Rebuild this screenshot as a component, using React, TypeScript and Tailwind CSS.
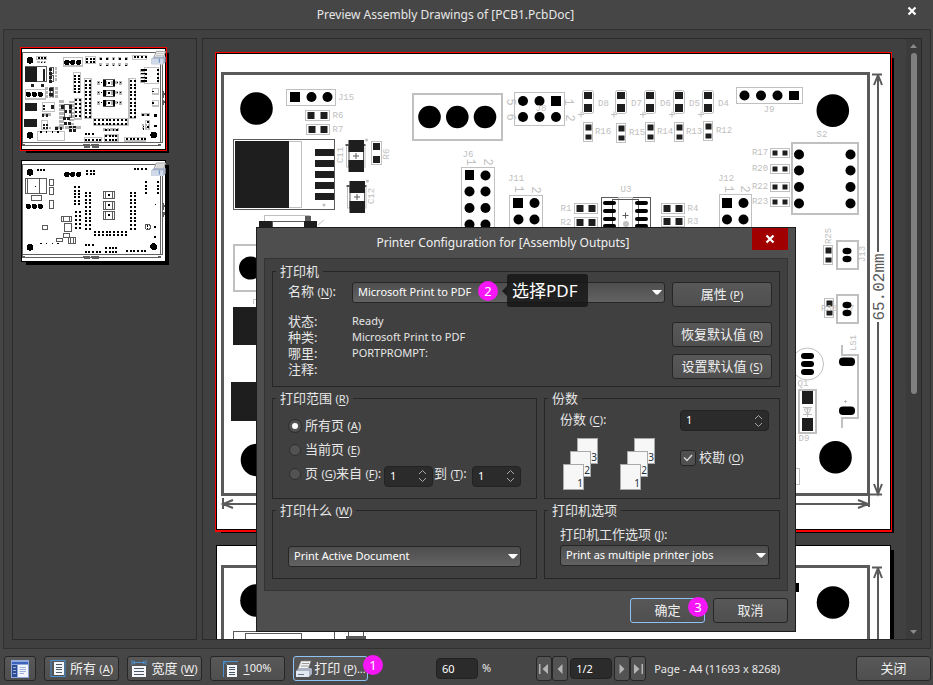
import React from "react";

const UI = "font-['Noto_Sans','Noto_Sans_CJK_SC',sans-serif]";

/* ---------- board drawing helpers ---------- */

const SILK = "#c0c0c0";
const LINE = "#5a5a5a";
const PAD = "#1e1e1e";

type Pt = [number, number];

function Box({ x, y, x2, y2, w = 1, c = SILK, rx = 0 }: { x: number; y: number; x2: number; y2: number; w?: number; c?: string; rx?: number }) {
  return <rect x={x} y={y} width={x2 - x} height={y2 - y} fill="none" stroke={c} strokeWidth={w} rx={rx} />;
}

function Fill({ x, y, x2, y2, c = PAD, rx = 0 }: { x: number; y: number; x2: number; y2: number; c?: string; rx?: number }) {
  return <rect x={x} y={y} width={x2 - x} height={y2 - y} fill={c} rx={rx} />;
}

function Holes({ at, r = 5 }: { at: Pt[]; r?: number }) {
  return (
    <>
      {at.map(([x, y]) => (
        <circle key={`${x}-${y}`} cx={x} cy={y} r={r} fill="#000" />
      ))}
    </>
  );
}

function Mark({ x, y, children, rot = 0, size = 9, c = SILK }: { x: number; y: number; children: string; rot?: number; size?: number; c?: string }) {
  return (
    <text
      x={x}
      y={y}
      fill={c}
      fontSize={size}
      fontFamily="Liberation Mono, monospace"
      textAnchor="middle"
      dominantBaseline="central"
      transform={rot ? `rotate(${rot} ${x} ${y})` : undefined}
    >
      {children}
    </text>
  );
}

function Plus({ x, y, c = SILK, r = 3 }: { x: number; y: number; c?: string; r?: number }) {
  return <path d={`M${x - r} ${y}H${x + r}M${x} ${y - r}V${y + r}`} stroke={c} fill="none" />;
}

/* two pads side by side in a frame */
function ResH({ x, y, label, lx, w = 19, h = 9, p = 5 }: { x: number; y: number; label: string; lx: number; w?: number; h?: number; p?: number }) {
  const cy = y + h / 2;
  return (
    <>
      <Box x={x} y={y} x2={x + w} y2={y + h} />
      <Fill x={x + 2} y={cy - p / 2} x2={x + 2 + p} y2={cy + p / 2} />
      <Fill x={x + w - 2 - p} y={cy - p / 2} x2={x + w - 2} y2={cy + p / 2} />
      <Mark x={lx} y={cy}>{label}</Mark>
    </>
  );
}

/* two pads stacked in a frame */
function ResV({ x, y }: { x: number; y: number }) {
  return (
    <>
      <Box x={x} y={y} x2={x + 9} y2={y + 19} />
      <Fill x={x + 2} y={y + 2} x2={x + 8} y2={y + 8} />
      <Fill x={x + 2} y={y + 12} x2={x + 8} y2={y + 17} />
    </>
  );
}

function Led({ x, label }: { x: number; label: string }) {
  return (
    <>
      <Box x={x} y={90.5} x2={x + 11} y2={113.5} rx={2} />
      <Fill x={x + 1.5} y={92} x2={x + 9.5} y2={99} />
      <Fill x={x + 1.5} y={104} x2={x + 9.5} y2={112} />
      <Plus x={x - 1.5} y={114.5} />
      <Mark x={x + 21} y={104}>{label}</Mark>
    </>
  );
}

function Cap({ x, y }: { x: number; y: number }) {
  return (
    <>
      <Box x={x - 2} y={y + 5} x2={x + 16.5} y2={y + 27} />
      <path d={`M${x - 3} ${y + 5}H${x + 17}`} stroke={LINE} strokeWidth={2} />
      <rect x={x} y={y} width={15.5} height={31} fill="#fff" />
      <Box x={x + 0.5} y={y + 5} x2={x + 15} y2={y + 27} c={LINE} />
      <Fill x={x} y={y} x2={x + 15.5} y2={y + 12} />
      <Fill x={x} y={y + 20} x2={x + 15.5} y2={y + 32} />
      <Plus x={x + 7.5} y={y + 16} c={LINE} />
      <circle cx={x + 18} cy={y} r={1.5} fill={SILK} />
    </>
  );
}

function DimensionV({ top, bottom }: { top: number; bottom: number }) {
  return (
    <g stroke={LINE} fill="none" strokeWidth={2}>
      <path d={`M878 ${top}V${bottom}`} />
      <path d={`M872 ${top + 0.5}H882`} />
      <path d={`M878 ${top + 1}L874 ${top + 11}M878 ${top + 1}L882 ${top + 11}`} />
    </g>
  );
}

function AssemblyPage() {
  return (
    <svg viewBox="215 52 680 481" className="block h-[481px] w-[680px] shrink-0" aria-label="Page 1" role="img">
      <g shapeRendering="crispEdges">
        <Fill x={221} y={58} x2={894} y2={533} c="#000" />
        <Fill x={215} y={52} x2={892} y2={532} c="#f00" />
        <Fill x={216} y={53} x2={891} y2={530} c="#000" />
        <Fill x={217} y={54} x2={890} y2={529} c="#fff" />
        <Box x={222.5} y={73.5} x2={868.5} y2={494.5} w={3} c={LINE} />
      </g>
      <DimensionV top={74} bottom={252} />
      <g stroke={LINE} fill="none" strokeWidth={2}>
        <path d="M878 322V494M870 494.5H882M874 484L878 494L882 484" />
        <path d="M223 504H868M223 498V509M233 500L223 504L233 508M869 496V507M858 500L868 504L858 508" />
      </g>
      <Mark x={880} y={287} rot={-90} size={16} c={LINE}>65.02mm</Mark>

      <Holes r={16.3} at={[[256.5, 108.5], [832.8, 110.6], [835.5, 457.3], [257, 460]]} />

      <g shapeRendering="crispEdges">
        <Box x={286.5} y={89.5} x2={335.5} y2={105.5} />
        <Fill x={290} y={92} x2={300} y2={102} c="#000" />
        <Box x={233.5} y={139.5} x2={334.5} y2={209.5} c={LINE} />
        <Fill x={235} y={141} x2={289} y2={208} />
        <path d="M289 141.5H301.5V207.5H289" stroke={SILK} fill="none" />
        {[149, 160, 171, 182, 193].map((y) => (
          <Fill key={y} x={315} y={y} x2={334} y2={y + 7} />
        ))}
        <path d="M264.5 221V215.5H310" stroke={SILK} fill="none" />
        <Fill x={305} y={216} x2={311} y2={221} c={LINE} />
        <Box x={272.5} y={221.5} x2={304.5} y2={229} c={LINE} />
        <Fill x={259} y={221} x2={272} y2={230} />
        <Fill x={304} y={221} x2={317} y2={230} />
        <Box x={371.5} y={141.5} x2={381.5} y2={164.5} />
        <Fill x={373} y={143} x2={380} y2={150} />
        <Fill x={373} y={156} x2={380} y2={163} />
        <Box x={413} y={94} x2={502} y2={140} w={2} />
        <Box x={514.5} y={92.5} x2={564.5} y2={125.5} />
        <Fill x={551} y={96} x2={561} y2={106} c="#000" />
      </g>
      <Holes at={[[311.5, 97], [327.5, 97]]} />
      <Mark x={346} y={98}>J15</Mark>
      <ResH x={305.5} y={110.5} w={24} h={10} p={7} label="R6" lx={338} />
      <ResH x={306.5} y={124.5} w={23} h={10} p={7} label="R7" lx={338} />
      <circle cx={324} cy={205} r={1.5} fill={SILK} />
      <Cap x={348.5} y={140} />
      <Cap x={349.5} y={181} />
      <Mark x={341} y={155} rot={-90}>C11</Mark>
      <Mark x={372} y={196} rot={-90}>C12</Mark>
      <Mark x={387} y={154} rot={-90}>R6</Mark>
      <path d="M318 225L324 220" stroke={SILK} />
      <Holes r={11.3} at={[[429.5, 117], [457.3, 117], [485, 117]]} />
      <Holes at={[[523, 101], [539.5, 101], [523, 117], [539.5, 117], [556, 117]]} />
      <Mark x={510} y={102} rot={90} size={12}>5</Mark>
      <Mark x={510} y={117} rot={90} size={12}>6</Mark>
      <Mark x={568} y={102} rot={90} size={12}>1</Mark>
      <Mark x={569} y={118} rot={90} size={12}>2</Mark>
      <Mark x={541} y={109}>J8</Mark>

      <Led x={582.5} label="D8" />
      <Led x={615.5} label="D7" />
      <Led x={644.5} label="D6" />
      <Led x={673.5} label="D5" />
      <Led x={702.5} label="D4" />
      <ResV x={583.5} y={122.5} />
      <ResV x={616.5} y={123.5} />
      <ResV x={645.5} y={122.5} />
      <ResV x={674.5} y={122.5} />
      <ResV x={703.5} y={121.5} />
      <Mark x={603} y={132}>R16</Mark>
      <Mark x={637} y={133}>R15</Mark>
      <Mark x={665} y={132}>R14</Mark>
      <Mark x={694} y={132}>R13</Mark>
      <Mark x={724} y={131}>R12</Mark>

      <g shapeRendering="crispEdges">
        <Box x={736.5} y={87.5} x2={802.5} y2={103.5} />
        <Fill x={789} y={91} x2={799} y2={100} c="#000" />
        <Box x={792} y={143} x2={858} y2={214} w={2} />
        <Box x={719.5} y={194.5} x2={751.5} y2={260} />
        <Fill x={722} y={198} x2={732} y2={208} c="#000" />
        <Box x={509.5} y={195.5} x2={542.5} y2={260} />
        <Fill x={513} y={198} x2={523} y2={208} c="#000" />
        <Box x={461.5} y={167.5} x2={494.5} y2={260} />
        <Fill x={465} y={170} x2={474} y2={180} c="#000" />
        <Box x={601.5} y={197.5} x2={650.5} y2={250} c={LINE} />
        <Box x={618.5} y={197.5} x2={632.5} y2={250} />
        <path d="M612.5 199V250M638.5 199V250M612 199.5H639" stroke={LINE} fill="none" />
      </g>
      {[203, 211, 219, 226].map((y) => (
        <g key={y}>
          <Fill x={603} y={y - 2} x2={616} y2={y + 2} c="#000" rx={2} />
          <Fill x={635} y={y - 2} x2={648} y2={y + 2} c="#000" rx={2} />
        </g>
      ))}
      <Plus x={625.5} y={215.5} c={LINE} />
      <circle cx={626} cy={224} r={3} fill={SILK} />
      <Mark x={626} y={190}>U3</Mark>
      <Holes at={[[744.5, 95.5], [761, 95.5], [777.5, 95.5]]} />
      <Mark x={769} y={110}>J9</Mark>
      <Mark x={822} y={135}>S2</Mark>
      <Holes at={[154.5, 170.5, 187, 203.5].flatMap((y): Pt[] => [[799, y], [850.5, y]])} />
      <ResH x={770.5} y={148.5} label="R17" lx={760} />
      <ResH x={770.5} y={164.5} label="R20" lx={760} />
      <ResH x={770.5} y={182.5} label="R22" lx={760} />
      <ResH x={770.5} y={197.5} label="R23" lx={760} />
      <Mark x={726} y={179}>J12</Mark>
      <Mark x={728} y={189} rot={90} size={12}>1</Mark>
      <Mark x={744} y={189} rot={90} size={12}>2</Mark>
      <Holes at={[[743.5, 203], [727, 219.5], [743.5, 219.5]]} />
      <Mark x={516} y={179}>J11</Mark>
      <Mark x={518} y={189} rot={90} size={12}>1</Mark>
      <Mark x={535} y={190} rot={90} size={12}>2</Mark>
      <Holes at={[[534.5, 203], [518.5, 219.5], [534.5, 219.5]]} />
      <Mark x={468} y={155}>J6</Mark>
      <Mark x={470} y={162} rot={90} size={12}>1</Mark>
      <Mark x={487} y={162} rot={90} size={12}>2</Mark>
      <Holes at={[[485.5, 175.5], [469.5, 191.5], [485.5, 191.5], [469.5, 208], [485.5, 208], [469.5, 224.5], [485.5, 224.5]]} />
      <ResH x={574.5} y={203.5} w={23} h={10} p={7} label="R1" lx={566} />
      <ResH x={574.5} y={217.5} w={23} h={10} p={7} label="R2" lx={566} />
      <ResH x={661.5} y={203.5} w={23} h={10} p={7} label="R4" lx={693} />
      <ResH x={661.5} y={216.5} w={23} h={10} p={7} label="R3" lx={693} />

      <ResV x={823.5} y={245.5} />
      <ResV x={824.5} y={298.5} />
      <Mark x={829} y={236} rot={-90}>R25</Mark>
      <Mark x={829} y={309}>R30</Mark>
      <Mark x={863} y={254} rot={-90}>J13</Mark>
      <Mark x={849} y={309}>J7</Mark>
      <Mark x={854} y={343} rot={-90}>LS1</Mark>
      <g shapeRendering="crispEdges">
        <Box x={837} y={241} x2={858} y2={269} w={2} />
        <Box x={837} y={295} x2={858} y2={323} w={2} />
        <path d="M842 345V355H858V418H842V428" fill="none" stroke={SILK} strokeWidth={2} />
        <Box x={799} y={390} x2={816} y2={433} w={2} />
        <Fill x={802} y={391} x2={813} y2={404} />
        <Fill x={802} y={418} x2={813} y2={431} />
        <Box x={780} y={468.5} x2={799.5} y2={484.5} />
        <Fill x={233} y={307} x2={275} y2={345} />
        <Fill x={231} y={382} x2={275} y2={421} />
        <Box x={234} y={245} x2={300} y2={291} w={2} />
      </g>
      {[251, 259, 305, 313].map((y) => (
        <ellipse key={y} cx={847} cy={y} rx={4.5} ry={3.2} fill="#000" />
      ))}
      <Fill x={839} y={357.5} x2={855} y2={366} c="#000" rx={4} />
      <Fill x={839} y={406.5} x2={855} y2={415} c="#000" rx={4} />
      <Plus x={845.5} y={401.5} r={1.5} />
      <circle cx={807.5} cy={364} r={16} fill="none" stroke={SILK} />
      {[356, 364, 372].map((y) => (
        <Fill key={y} x={801} y={y - 3} x2={814} y2={y + 3} c="#000" rx={3} />
      ))}
      <Mark x={803} y={384}>Q1</Mark>
      <path d="M803 407.5H812M807.5 407V417M804 409L807.5 414.5L811 409ZM803 414.5H812" stroke={SILK} fill="none" />
      <Mark x={804} y={439}>D9</Mark>
      <Holes r={11.5} at={[[250.5, 268]]} />
      <path d="M253.5 304V299.5H258" stroke={SILK} fill="none" />
    </svg>
  );
}

function BottomPage() {
  return (
    <svg viewBox="215 545 680 481" className="block h-[481px] w-[680px] shrink-0" aria-label="Page 2" role="img">
      <g shapeRendering="crispEdges">
        <Fill x={221} y={550} x2={894} y2={1026} c="#000" />
        <Fill x={216} y={545} x2={891} y2={1020} c="#000" />
        <Fill x={217} y={546} x2={890} y2={1019} c="#fff" />
        <Box x={222.5} y={566.5} x2={868.5} y2={986.5} w={3} c={LINE} />
        <path d="M233.5 700V631.5H334.5V700M245.5 700V633.5H301.5V700" stroke={LINE} fill="none" />
        <Fill x={346} y={636} x2={366} y2={640} c={LINE} />
        <Box x={348.5} y={631.5} x2={363.5} y2={640} c={LINE} />
        <Fill x={789} y={583} x2={799} y2={592} c="#000" />
      </g>
      <DimensionV top={567} bottom={980} />
      <Holes r={16.3} at={[[256.5, 600.5], [833, 602.5]]} />
    </svg>
  );
}

/* ---------- thumbnails (drawn at three units per pixel) ---------- */

type Grid = [x: number, y: number, cols: number, rows: number, dx: number, dy: number, s?: number];

function Pins({ grids, c = "#000" }: { grids: Grid[]; c?: string }) {
  return (
    <>
      {grids.flatMap(([x, y, cols, rows, dx, dy, s = 6], g) =>
        Array.from({ length: cols * rows }, (_, i) => (
          <rect key={`${g}-${i}`} x={x + (i % cols) * dx} y={y + Math.floor(i / cols) * dy} width={s} height={s} fill={c} />
        )),
      )}
    </>
  );
}

function Boxes({ list, c, w = 3 }: { list: [number, number, number, number][]; c: string; w?: number }) {
  return (
    <>
      {list.map(([x, y, x2, y2], i) => (
        <Box key={i} x={x} y={y} x2={x2} y2={y2} c={c} w={w} />
      ))}
    </>
  );
}

function ThumbFrame() {
  return (
    <g>
      <path d="M66 68H495M67.500 68V345M66 338H488M481 68V338M488 68V338M66 346H482" stroke="#606060" strokeWidth={3} fill="none" />
      <path d="M66 345H75M474 345H483M249 346H270M273 346H297M252 350H270M276 350H297M488 184V205M492 190V196M488 211V226M492 212V220" stroke="#606060" strokeWidth={6} fill="none" />
    </g>
  );
}

function PrinterGlyph() {
  return (
    <g shapeRendering="auto">
      <path d="M469 64L497 64L490 82L462 82Z" fill="#f4f4f4" stroke="#9a9a9a" strokeWidth={3} />
      <path d="M470 70H492M468 76H490" stroke="#a0a0a0" strokeWidth={2} />
      <path d="M454 86L462 80H497V96L490 103H454Z" fill="#a3b0c6" />
      <path d="M454 86H490V103H454Z" fill="#cfd9e8" />
      <path d="M478 86V98" stroke="#6688bb" strokeWidth={3} />
    </g>
  );
}

const commonPins: Grid[] = [
  [222, 134, 2, 6, 12, 10],
  [254, 150, 2, 11, 12, 10.8],
  [389, 150, 2, 11, 12, 10.8],
  [282, 268, 9, 2, 11.5, 10],
  [226, 208, 2, 5, 10, 12],
  [258, 84, 3, 2, 11, 10],
  [401, 78, 4, 1, 11, 10],
  [254, 308, 3, 1, 11, 10],
  [254, 327, 5, 1, 11, 10],
  [316, 316, 4, 2, 10, 11],
  [378, 325, 6, 1, 11, 10],
  [435, 118, 1, 4, 10, 11],
  [470, 118, 1, 4, 10, 11],
];

function ThumbTop() {
  return (
    <svg viewBox="60 51 450 321" className="block h-[107px] w-[150px]" aria-hidden="true" shapeRendering="crispEdges">
      <Fill x={78} y={69} x2={507} y2={369} c="#000" />
      <Fill x={60} y={51} x2={501} y2={363} c="#f00" />
      <Fill x={63} y={54} x2={498} y2={360} c="#000" />
      <Fill x={66} y={57} x2={495} y2={357} c="#fff" />
      <ThumbFrame />
      <Boxes
        c={SILK}
        w={4}
        list={[
          [191, 83, 247, 108], [220, 128, 242, 188], [253, 146, 273, 264], [387, 146, 407, 264], [281, 265, 384, 285],
          [433, 113, 475, 160], [112, 305, 193, 331], [77, 179, 136, 207], [127, 217, 163, 244], [224, 205, 243, 267],
          [253, 322, 305, 334], [313, 315, 354, 334], [374, 322, 437, 333], [256, 80, 287, 101], [397, 76, 439, 88],
          [109, 79, 140, 88], [457, 176, 475, 192], [457, 212, 475, 228], [437, 271, 448, 299], [125, 272, 143, 299],
        ]}
      />
      <Pins
        c="#b5b5b5"
        grids={[
          [146, 112, 2, 4, 18, 11, 8], [136, 172, 4, 3, 10, 12, 7], [176, 210, 2, 7, 8, 12, 9], [206, 212, 2, 7, 8, 11, 7],
          [290, 154, 4, 3, 22, 30, 10], [344, 154, 2, 3, 14, 30, 9], [420, 118, 2, 4, 7, 11, 7], [298, 82, 5, 2, 19, 18, 9],
          [112, 92, 3, 1, 10, 10, 7], [165, 288, 8, 1, 10, 10, 8], [310, 295, 5, 1, 10, 10, 8], [426, 283, 3, 2, 9, 9, 6],
          [126, 250, 3, 1, 9, 9, 8], [128, 290, 3, 1, 9, 9, 7], [424, 250, 3, 1, 9, 9, 7],
        ]}
      />
      <Boxes c="#5a5a5a" list={[[76, 110, 139, 155], [311, 149, 343, 168], [311, 180, 343, 200], [311, 210, 343, 230], [150, 112, 160, 130], [150, 135, 160, 155], [150, 173, 160, 199], [192, 222, 214, 262]]} />
      <Fill x={76} y={110} x2={111} y2={155} />
      <Fill x={75} y={219} x2={111} y2={243} />
      <Fill x={72} y={267} x2={111} y2={291} />
      <Pins c={PAD} grids={[[129, 118, 1, 4, 9, 9, 7], [94, 163, 2, 1, 30, 9, 9], [130, 224, 1, 2, 9, 10, 6], [152, 225, 1, 1, 9, 9, 11], [148, 113, 1, 2, 9, 12, 9], [148, 137, 1, 2, 9, 12, 9], [148, 174, 1, 2, 9, 15, 10], [182, 226, 2, 1, 24, 9, 10], [194, 240, 2, 1, 12, 9, 8], [190, 262, 2, 1, 12, 9, 8], [192, 276, 2, 1, 12, 9, 8], [166, 292, 2, 1, 14, 9, 7], [208, 288, 2, 2, 12, 10, 7], [126, 253, 2, 1, 12, 9, 7], [128, 281, 2, 2, 9, 10, 6]]} />
      <Pins
        grids={[
          ...commonPins,
          [310, 150, 2, 3, 28, 30, 8], [310, 159, 2, 3, 28, 30, 8], [324, 155, 1, 3, 5, 30, 6],
          [294, 156, 2, 3, 9, 30, 4], [350, 156, 2, 3, 9, 30, 4], [300, 84, 5, 1, 19, 9, 5], [300, 104, 5, 1, 19, 9, 4],
          [115, 82, 3, 1, 9, 9, 4], [122, 95, 2, 1, 9, 9, 4], [424, 118, 2, 4, 6, 11, 4], [456, 182, 1, 2, 8, 34, 5],
          [427, 252, 2, 1, 14, 9, 5], [462, 252, 1, 2, 9, 32, 8], [440, 272, 1, 2, 9, 16, 7], [428, 288, 1, 2, 9, 7, 4],
          [316, 298, 4, 1, 11, 10, 4], [121, 304, 4, 1, 17, 9, 4],
        ]}
      />
      <Holes r={8} at={[[201, 97], [218, 97], [236, 97], [85, 193], [103, 193], [121, 193]]} />
      <Holes r={10} at={[[90, 91], [90, 316], [461, 315]]} />
      <PrinterGlyph />
    </svg>
  );
}

function ThumbBottom() {
  return (
    <svg viewBox="60 51 450 321" className="block h-[107px] w-[150px]" aria-hidden="true" shapeRendering="crispEdges">
      <Fill x={78} y={66} x2={507} y2={366} c="#000" />
      <Fill x={63} y={51} x2={498} y2={357} c="#000" />
      <Fill x={66} y={54} x2={495} y2={354} c="#fff" />
      <g transform="translate(0 -4)">
        <ThumbFrame />
        <Boxes
          c="#5a5a5a"
          list={[
            [76, 110, 139, 155], [82, 110, 117, 155], [94, 161, 125, 176], [148, 113, 160, 131], [148, 138, 160, 157], [148, 176, 160, 200],
            [310, 149, 343, 170], [310, 180, 343, 203], [310, 210, 343, 232], [316, 149, 337, 170], [316, 180, 337, 203], [316, 210, 337, 232],
            [184, 224, 214, 239], [190, 224, 208, 239], [193, 244, 214, 270], [190, 274, 209, 286], [206, 287, 226, 304], [212, 287, 220, 304],
            [168, 290, 186, 300], [127, 252, 143, 262],
          ]}
        />
        <circle cx={443} cy={256} r={8} fill="none" stroke="#5a5a5a" strokeWidth={3} />
        <Pins grids={[...commonPins, [105, 132, 1, 1, 9, 9, 3], [325, 158, 1, 3, 5, 30, 6], [440, 251, 1, 2, 9, 8, 4], [465, 187, 1, 1, 9, 9, 3], [462, 253, 1, 2, 9, 30, 7], [112, 83, 3, 1, 9, 9, 4], [121, 304, 4, 1, 17, 9, 4]]} />
        <Holes r={8} at={[[201, 98], [218, 98], [236, 98], [85, 194], [103, 194], [121, 194]]} />
        <Holes r={10} at={[[90, 92], [90, 317], [461, 315]]} />
        <PrinterGlyph />
      </g>
    </svg>
  );
}

/* ---------- controls ---------- */

function Key({ k }: { k: string }) {
  return (
    <span className="text-[11px]">
      (<span className="underline underline-offset-2">{k}</span>)
    </span>
  );
}

function Button({ children, className = "", ...rest }: React.ButtonHTMLAttributes<HTMLButtonElement>) {
  return (
    <button
      type="button"
      className={`flex h-[25px] items-center justify-center rounded-[3px] border bg-linear-to-b from-[#585858] to-[#4f4f4f] whitespace-nowrap text-[13px] text-[#f0f0f0] ${className}`}
      {...rest}
    >
      {children}
    </button>
  );
}

function Select({ value, label, id }: { value: string; label?: string; id?: string }) {
  return (
    <div className="relative w-full">
      <select
        id={id}
        aria-label={label}
        className="block h-[21px] w-full appearance-none rounded-[3px] border border-[#262626] bg-linear-to-b from-[#4e4e4e] to-[#626262] pl-[5px] text-[11px] text-white outline-none"
      >
        <option>{value}</option>
      </select>
      <svg viewBox="0 0 10 5" className="pointer-events-none absolute top-[8px] right-[3px] h-[5px] w-[10px]">
        <path d="M0 0H10L6 4.500H4Z" fill="#fff" />
      </svg>
    </div>
  );
}

function Spinner({ id, label, className }: { id?: string; label?: string; className: string }) {
  return (
    <div className={`flex h-[21px] items-center rounded-[4px] border border-[#222] bg-[#2b2b2b] ${className}`}>
      <input id={id} aria-label={label} defaultValue="1" inputMode="numeric" className="w-0 flex-1 bg-transparent pl-[5px] text-[11px] text-white outline-none" />
      <div className="mr-[5px] flex flex-col gap-[2px]">
        <button type="button" aria-label="Increase" className="block h-[6px] w-[9px]">
          <svg viewBox="0 0 9 6" className="block h-full w-full"><path d="M1 5L4.500 1.500L8 5" stroke="#a8a8a8" fill="none" /></svg>
        </button>
        <button type="button" aria-label="Decrease" className="block h-[6px] w-[9px]">
          <svg viewBox="0 0 9 6" className="block h-full w-full"><path d="M1 1L4.500 4.500L8 1" stroke="#a8a8a8" fill="none" /></svg>
        </button>
      </div>
    </div>
  );
}

function Group({ title, k, children }: { title: string; k?: string; children: React.ReactNode }) {
  return (
    <fieldset className="min-w-0 border border-[#262626]">
      <legend className="ml-[3px] px-1 text-[13px] leading-4">
        {title} {k && <Key k={k} />}
      </legend>
      {children}
    </fieldset>
  );
}

function Radio({ id, checked, children }: { id: string; checked?: boolean; children: React.ReactNode }) {
  return (
    <div className="flex h-6 items-center">
      <input
        id={id}
        type="radio"
        name="range"
        defaultChecked={checked}
        className="mr-1 size-3 shrink-0 appearance-none rounded-full border border-[#2e2e2e] bg-[#525252] checked:border-[3px] checked:border-[#525252] checked:bg-white checked:outline checked:outline-[#2e2e2e]"
      />
      {children}
    </div>
  );
}

function Badge({ n, className }: { n: number; className: string }) {
  return (
    <span className={`absolute flex size-5 items-center justify-center rounded-full bg-[#f716f7] text-[13px] leading-none text-white ${className}`}>
      {n}
    </span>
  );
}

function CopiesGlyph() {
  return (
    <svg viewBox="0 0 36 52" className="block h-[52px] w-9" role="img" aria-label="3 2 1">
      {[
        [14, 0, "3"],
        [7, 13, "2"],
        [0, 26, "1"],
      ].map(([x, y, n]) => (
        <g key={n}>
          <rect x={Number(x) + 0.5} y={Number(y) + 0.5} width={20} height={25} fill="#f7f7f7" stroke="#a9a9a9" />
          <text x={Number(x) + 17} y={Number(y) + 23} fontSize={10} textAnchor="middle" fill="#22303c" fontFamily="Noto Sans, sans-serif">
            {n}
          </text>
        </g>
      ))}
    </svg>
  );
}

function DocLines({ kind }: { kind: "page" | "width" | "actual" }) {
  return (
    <svg viewBox="0 0 16 18" className="h-[18px] w-4 shrink-0">
      {kind === "page" && <rect x="1" y="0.500" width="14" height="16" fill="none" stroke="#4a90d0" />}
      {kind === "width" && <path d="M1 0V5M15 0V5M2 2.500H14M4 1L2 2.500L4 4M12 1L14 2.500L12 4" fill="none" stroke="#4a90d0" />}
      {kind === "actual" && <path d="M0.500 17V1.500H15M0.500 1.500L4 5" fill="none" stroke="#4a90d0" />}
      {kind === "width" ? (
        <>
          <rect x="1" y="6" width="14" height="11" fill="#f3f6fa" />
          <path d="M3 8.500H13M3 11.500H13M3 14.500H13" stroke="#4d5866" />
        </>
      ) : (
        <>
          <rect x="4" y={kind === "page" ? 2 : 5} width="10" height={kind === "page" ? 13 : 12} fill="#f3f6fa" />
          <path d={kind === "page" ? "M6 4.500H12M6 7.500H12M6 9.500H12M6 12.500H12" : "M6 7.500H12M6 9.500H12M6 12.500H12M6 14.500H12"} stroke="#4d5866" />
        </>
      )}
    </svg>
  );
}

function NavButton({ label, d }: { label: string; d: string }) {
  return (
    <button type="button" aria-label={label} className="flex h-[25px] w-4 items-center justify-center rounded-[3px] border border-[#262626] bg-[#535353]">
      <svg viewBox="0 0 12 14" className="h-[14px] w-3 shrink-0">
        <path d={d} fill="#b4b4b4" />
      </svg>
    </button>
  );
}

function CloseGlyph() {
  return (
    <svg viewBox="0 0 10 10" className="size-[10px]">
      <path d="M1.500 1.500L8.500 8.500M8.500 1.500L1.500 8.500" stroke="#fff" strokeWidth="2.200" />
    </svg>
  );
}

/* ---------- dialog ---------- */

function PrinterDialog() {
  return (
    <div role="dialog" aria-label="Printer Configuration" className="absolute top-[227px] left-[256px] w-[540px] border border-[#1c1c1c] bg-[#4e4e4e] px-[7px] pb-2 text-[13px] text-[#e6e6e6]">
      <div className="flex h-[30px]">
        <h2 className="flex-1 pr-[10px] text-center text-[12px] leading-[30px] text-[#f0f0f0]">Printer Configuration for [Assembly Outputs]</h2>
        <button type="button" aria-label="Close dialog" className="flex h-[22px] w-9 items-center justify-center bg-[#a00000]">
          <CloseGlyph />
        </button>
      </div>

      <div className="flex flex-col gap-[3px] border border-[#333] bg-[#404040] px-[7px] pt-1 pb-[11px]">
        <Group title="打印机">
          <div className="flex gap-[7px] pt-[3px] pr-[7px] pb-[7px] pl-[15px]">
            <div className="flex-1">
              <div className="flex">
                <label htmlFor="printer" className="w-16 shrink-0 leading-[18px]">
                  名称 <Key k="N" />:
                </label>
                <div className="relative flex-1">
                  <Select id="printer" value="Microsoft Print to PDF" />
                  <Badge n={2} className="-top-px left-[126px]" />
                  <div role="tooltip" className="absolute -top-2 left-[155px] rounded-[3px] bg-[#161616]/85 pr-[10px] pl-[5px] text-[17px] leading-[33px] whitespace-nowrap text-white">
                    选择PDF
                    <svg viewBox="0 0 5 10" className="absolute top-3 -left-[5px] h-[10px] w-[5px]">
                      <path d="M5 0V10L0 5Z" fill="#1c1c1c" />
                    </svg>
                  </div>
                </div>
              </div>
              <dl className="mt-[10px] grid grid-cols-[64px_1fr] leading-4">
                <dt>状态:</dt>
                <dd className="text-[11px]">Ready</dd>
                <dt>种类:</dt>
                <dd className="text-[11px]">Microsoft Print to PDF</dd>
                <dt>哪里:</dt>
                <dd className="text-[11px]">PORTPROMPT:</dd>
                <dt>注释:</dt>
                <dd />
              </dl>
            </div>
            <div className="flex w-[100px] flex-col gap-[7px]">
              <Button className="mb-2 border-[#262626]"><span>属性 <Key k="P" /></span></Button>
              <Button className="border-[#262626]"><span>恢复默认值 <Key k="R" /></span></Button>
              <Button className="border-[#262626]"><span>设置默认值 <Key k="S" /></span></Button>
            </div>
          </div>
        </Group>

        <div className="grid grid-cols-[265px_1fr] gap-x-[7px] gap-y-[3px]">
          <Group title="打印范围" k="R">
            <div className="pt-[7px] pb-3 pl-4">
              <Radio id="all" checked>
                <label htmlFor="all">所有页 <Key k="A" /></label>
              </Radio>
              <Radio id="current">
                <label htmlFor="current">当前页 <Key k="E" /></label>
              </Radio>
              <Radio id="pages">
                <label htmlFor="pages">页 <Key k="G" /></label>
                <label htmlFor="from" className="w-12">来自 <Key k="F" />:</label>
                <Spinner id="from" className="mt-1 w-[49px]" />
                <label htmlFor="to" className="ml-px w-[38px]">到 <Key k="T" />:</label>
                <Spinner id="to" className="mt-1 w-[49px]" />
              </Radio>
            </div>
          </Group>

          <Group title="份数">
            <div className="grid grid-cols-[1fr_89px] pt-1 pr-[10px] pl-[15px]">
              <label htmlFor="copies" className="leading-[18px]">份数 <Key k="C" />:</label>
              <Spinner id="copies" className="w-full" />
              <div className="mt-[7px] flex gap-[21px] pl-[3px]">
                <CopiesGlyph />
                <CopiesGlyph />
              </div>
              <div className="mt-[19px] flex h-4 items-center gap-[3px]">
                <span className="relative flex size-4">
                  <input id="collate" type="checkbox" defaultChecked className="size-4 appearance-none rounded-[3px] border border-[#262626] bg-[#505050]" />
                  <svg viewBox="0 0 16 16" className="pointer-events-none absolute inset-0">
                    <path d="M4 7.500L7 10.500L12 5" stroke="#d8d8d8" strokeWidth="1.400" fill="none" />
                  </svg>
                </span>
                <label htmlFor="collate">校勘 <Key k="O" /></label>
              </div>
            </div>
          </Group>

          <Group title="打印什么" k="W">
            <div className="px-[15px] pt-[27px] pb-[11px]">
              <Select label="打印什么" value="Print Active Document" />
            </div>
          </Group>

          <Group title="打印机选项">
            <div className="pt-2 pr-[10px] pb-[11px] pl-[15px]">
              <label htmlFor="jobs" className="mb-[2px] block leading-[17px]">打印机工作选项 <Key k="J" />:</label>
              <Select id="jobs" value="Print as multiple printer jobs" />
            </div>
          </Group>
        </div>
      </div>

      <div className="flex justify-end gap-2 pt-[7px]">
        <div className="relative">
          <Button className="w-[75px] border-[#8fc1f2]">确定</Button>
          <Badge n={3} className="-top-px -right-[3px]" />
        </div>
        <Button className="w-[75px] border-[#262626]">取消</Button>
      </div>
    </div>
  );
}

/* ---------- window ---------- */

export default function App() {
  return (
    <div className={`relative flex h-screen flex-col overflow-hidden bg-[#464646] text-[#e6e6e6] ${UI}`}>
      <header className="flex h-[29px] shrink-0 items-center">
        <h1 className="flex-1 text-center text-[12px] text-[#e6e6e6]">Preview Assembly Drawings of [PCB1.PcbDoc]</h1>
        <button type="button" aria-label="Close" className="mb-2 flex w-[42px] justify-center">
          <CloseGlyph />
        </button>
      </header>

      <main className="mr-[2px] ml-[3px] flex min-h-0 flex-1 gap-[5px] border border-[#303030] bg-[#404040] p-2">
        <nav aria-label="Pages" className="flex w-[185px] shrink-0 flex-col gap-[6px] border border-[#2a2a2a] pt-2 pl-[7px]">
          <button type="button" aria-label="Page 1" className="w-fit"><ThumbTop /></button>
          <button type="button" aria-label="Page 2" className="w-fit"><ThumbBottom /></button>
        </nav>
        <section className="flex min-w-0 flex-1 overflow-hidden border border-[#2a2a2a]">
          <div className="flex min-w-0 flex-1 flex-col gap-3 overflow-hidden pt-[13px] pl-3">
            <AssemblyPage />
            <BottomPage />
          </div>
          <div className="flex w-[15px] shrink-0 flex-col items-center bg-[#3b3b3b] py-[5px]">
            <svg viewBox="0 0 7 4" className="h-1 w-[7px]"><path d="M3.500 0L7 4H0Z" fill="#8a8a8a" /></svg>
            <div className="mt-[5px] h-[341px] w-[6px] rounded-full bg-[#808080]" />
            <svg viewBox="0 0 7 4" className="mt-auto h-1 w-[7px]"><path d="M0 0H7L3.500 4Z" fill="#8a8a8a" /></svg>
          </div>
        </section>
      </main>

      <footer className="flex h-9 shrink-0 items-start gap-2 pt-[7px] pr-[2px] pl-1">
        <Button aria-label="Toggle thumbnails" className="w-8 border-[#262626]">
          <svg viewBox="0 0 18 18" className="size-[18px]">
            <rect width="18" height="18" fill="#8fa9dd" />
            <rect y="2" x="1" width="16" height="2" fill="#3b62b8" />
            <rect x="1" y="5" width="5" height="12" fill="#2e4c93" />
            <rect x="7" y="5" width="10" height="12" fill="#f1f4fb" />
            <path d="M2 7.500H5M2 10.500H5M2 13.500H5M8.500 7.500H15M8.500 9.500H15M8.500 11.500H15M8.500 13.500H13" stroke="#9db1dc" />
          </svg>
        </Button>
        <Button className="w-[75px] gap-1 border-[#262626]"><DocLines kind="page" /><span>所有 <Key k="A" /></span></Button>
        <Button className="w-[75px] gap-1 border-[#262626]"><DocLines kind="width" /><span>宽度 <Key k="W" /></span></Button>
        <Button className="w-[75px] gap-1 border-[#262626]"><DocLines kind="actual" /><span className="text-[11px]"><u className="underline-offset-2">1</u>00%</span></Button>
        <div className="relative">
          <Button className="w-[75px] gap-px border-[#8fc1f2]">
            <svg viewBox="0 0 18 18" className="size-[18px] shrink-0">
              <path d="M6 1H16L13 9H3Z" fill="#f2f2f2" stroke="#888" strokeWidth="0.600" />
              <path d="M7 3.500H14M6 6H13" stroke="#999" />
              <path d="M1 11L4 8H16L17 9V14L14 17H1Z" fill="#aab4c4" />
              <path d="M1 11H14V17H1Z" fill="#e2e8f1" />
              <path d="M3 14.500H9" stroke="#6b7687" />
            </svg>
            <span>打印 <Key k="P" /><span className="text-[11px]">...</span></span>
          </Button>
          <Badge n={1} className="-top-px -right-[15px]" />
        </div>
        <div className="mt-[2px] ml-[60px] flex items-center gap-1">
          <input aria-label="Zoom" defaultValue="60" className="h-[21px] w-[42px] rounded-[4px] border border-[#222] bg-[#2b2b2b] pl-[5px] text-[11px] text-white outline-none" />
          <span className="text-[11px]">%</span>
        </div>
        <div className="ml-[37px] flex items-center">
          <NavButton label="First page" d="M1 2H2.500V12H1ZM10 2V12L4.500 7Z" />
          <NavButton label="Previous page" d="M8.500 2V12L3.500 7Z" />
          <input aria-label="Page" defaultValue="1/2" className="mx-[2px] h-[21px] w-[42px] rounded-[4px] border border-[#222] bg-[#2b2b2b] pl-[5px] text-[11px] text-white outline-none" />
          <NavButton label="Next page" d="M3.500 2V12L8.500 7Z" />
          <NavButton label="Last page" d="M2 2V12L7.500 7ZM9.500 2H11V12H9.500Z" />
        </div>
        <span className="text-[11px] leading-[25px] whitespace-nowrap">Page - A4 (11693 x 8268)</span>
        <Button className="ml-auto w-[75px] border-[#262626]">关闭</Button>
      </footer>

      <PrinterDialog />
    </div>
  );
}
